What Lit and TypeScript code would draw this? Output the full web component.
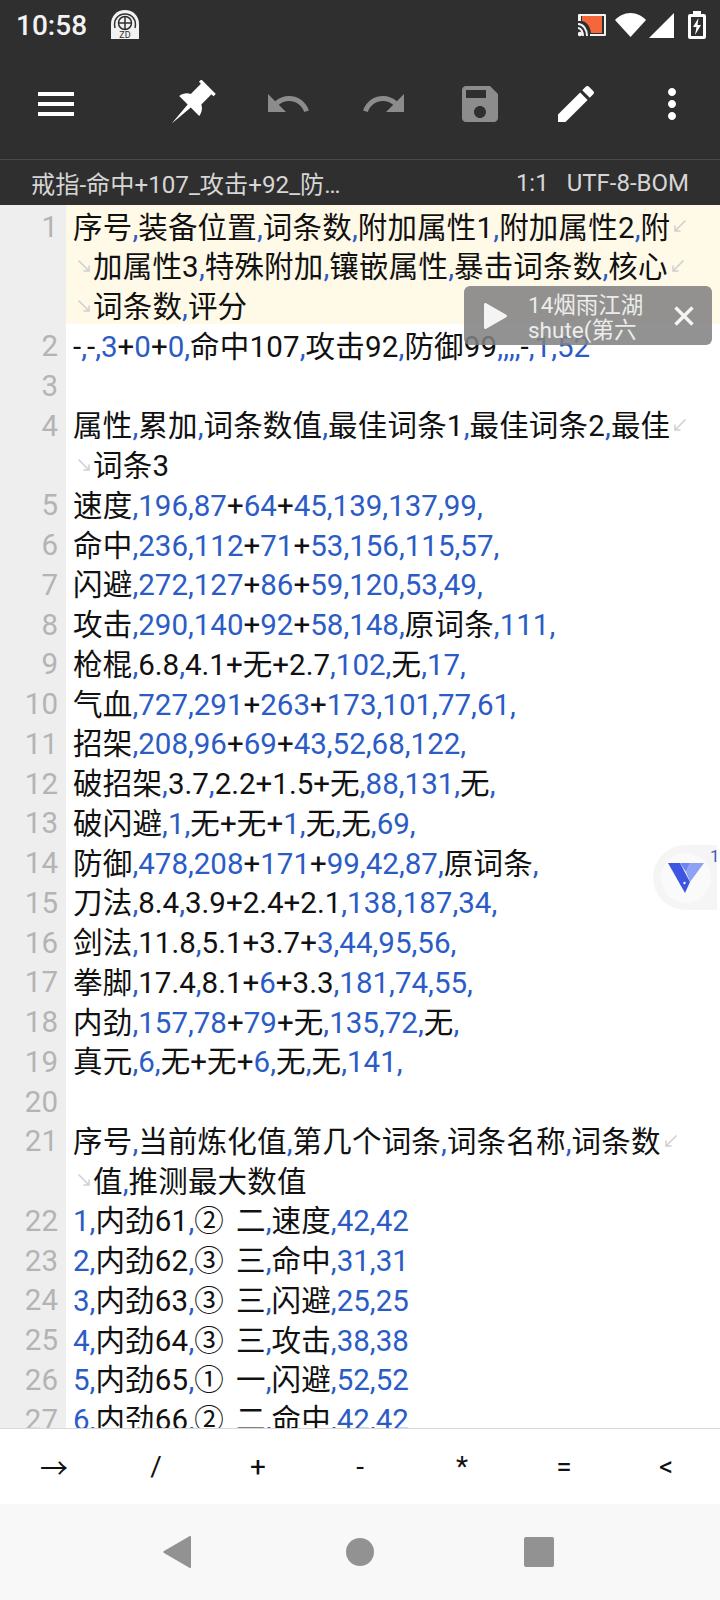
import { LitElement, css, html, svg } from 'lit';
import { customElement } from 'lit/decorators.js';

// each logical line holds its visual rows, wrapped the way the editor wraps them
const LINES: string[][] = [
  ['序号,装备位置,词条数,附加属性1,附加属性2,附', '加属性3,特殊附加,镶嵌属性,暴击词条数,核心', '词条数,评分'],
  ['-,-,3+0+0,命中107,攻击92,防御99,,,,-,1,52'],
  [''],
  ['属性,累加,词条数值,最佳词条1,最佳词条2,最佳', '词条3'],
  ['速度,196,87+64+45,139,137,99,'],
  ['命中,236,112+71+53,156,115,57,'],
  ['闪避,272,127+86+59,120,53,49,'],
  ['攻击,290,140+92+58,148,原词条,111,'],
  ['枪棍,6.8,4.1+无+2.7,102,无,17,'],
  ['气血,727,291+263+173,101,77,61,'],
  ['招架,208,96+69+43,52,68,122,'],
  ['破招架,3.7,2.2+1.5+无,88,131,无,'],
  ['破闪避,1,无+无+1,无,无,69,'],
  ['防御,478,208+171+99,42,87,原词条,'],
  ['刀法,8.4,3.9+2.4+2.1,138,187,34,'],
  ['剑法,11.8,5.1+3.7+3,44,95,56,'],
  ['拳脚,17.4,8.1+6+3.3,181,74,55,'],
  ['内劲,157,78+79+无,135,72,无,'],
  ['真元,6,无+无+6,无,无,141,'],
  [''],
  ['序号,当前炼化值,第几个词条,词条名称,词条数', '值,推测最大数值'],
  ['1,内劲61,②  二,速度,42,42'],
  ['2,内劲62,③  三,命中,31,31'],
  ['3,内劲63,③  三,闪避,25,25'],
  ['4,内劲64,③  三,攻击,38,38'],
  ['5,内劲65,①  一,闪避,52,52'],
  ['6,内劲66,②  二,命中,42,42'],
];

const KEYS = ['→', '/', '+', '-', '*', '=', '<'];

const icon = (d: string, dim = false) => html`<svg class="ticon ${dim ? 'dim' : ''}" viewBox="0 0 24 24"><path d=${d}></path></svg>`;

const wrapEnd = html`<svg class="wrap-end" viewBox="0 0 14 14"><path d="M12.5 1.5 2 12M2 6.5V12h5.500"></path></svg>`;
const wrapStart = html`<svg class="wrap-start" viewBox="0 0 14 14"><path d="M1.500 1.500 12 12M12 6.500V12H6.500"></path></svg>`;

function tokens(row: string) {
  return row.split(/([,+])/).map((t) => {
    if (t === ',' || /^\d+$/.test(t)) return html`<span class="num">${t}</span>`;
    return /[\u4e00-\u9fff]/.test(t) ? html`<span class="han">${t}</span>` : t;
  });
}

@customElement('app-root')
export class AppRoot extends LitElement {
  static styles = css`
    :host {
      display: flex;
      flex-direction: column;
      width: 720px;
      height: 1600px;
      position: relative;
      overflow: hidden;
      background: #fff;
      font-family: Roboto, 'Noto Sans CJK SC', sans-serif;
    }

    .status {
      height: 50px;
      background: #2f2f2f;
      display: flex;
      align-items: center;
      padding: 0 14px 0 16px;
      color: #f2f2f2;
      flex: none;
    }
    .time {
      font-size: 28px;
      font-weight: 500;
      width: 94px;
    }
    .globe { width: 30px; height: 30px; }
    .sys {
      margin-left: auto;
      display: flex;
      align-items: center;
    }
    .sys svg { display: block; }

    .toolbar {
      height: 110px;
      box-sizing: border-box;
      background: #2f2f2f;
      border-bottom: 1px solid #4a4a4a;
      display: flex;
      align-items: center;
      padding: 0 0 2px 24px;
      flex: none;
    }
    .slot {
      width: 96px;
      display: flex;
      justify-content: center;
    }
    .slot.first { width: 64px; margin-right: 56px; }
    .ticon {
      width: 48px;
      height: 48px;
      fill: #fff;
    }
    .ticon.dim { fill: #8c8c8c; }

    .tab {
      height: 45px;
      background: #2f2f2f;
      color: #d6d6d6;
      font-size: 24.200px;
      display: flex;
      align-items: center;
      justify-content: space-between;
      padding: 0 31px;
      flex: none;
    }
    .pos { font-size: 24px; }
    .pos span:first-child { margin-right: 18px; }

    .editor {
      flex: 1;
      min-height: 0;
      overflow: hidden;
      background: linear-gradient(to right, #eeeeee 66px, #fff 66px);
      color: #111;
      font-size: 29.500px;
    }
    .line {
      display: grid;
      grid-template-columns: 58px 1fr;
      column-gap: 15px;
    }
    .line.current {
      background: linear-gradient(to right, #eeeeee 66px, #fff9e8 66px);
    }
    .no {
      color: #b4b4b4;
      text-align: right;
      line-height: 39.750px;
      height: 39.750px;
      box-sizing: border-box;
      padding-top: 3px;
    }
    .row {
      height: 39.750px;
      line-height: 39.750px;
      box-sizing: border-box;
      padding-top: 7px;
      white-space: pre;
      word-spacing: -1.500px;
      display: flex;
      align-items: center;
    }
    .num { color: #2b5cc6; }
    .han { letter-spacing: 0.200px; }
    svg.wrap-end, svg.wrap-start {
      width: 14px;
      height: 14px;
      fill: none;
      stroke: #cfcfcf;
      stroke-width: 1.500;
      flex: none;
    }
    .wrap-end { margin: -4px 0 0 3px; }
    .wrap-start { margin: -4px 2px 0 4px; }

    .keys {
      height: 76px;
      box-sizing: border-box;
      border-top: 1px solid #d8d8d8;
      padding: 0 3px;
      display: grid;
      grid-template-columns: repeat(7, 1fr);
      align-items: center;
      justify-items: center;
      font-size: 28px;
      color: #111;
      background: #fff;
      flex: none;
    }

    .nav {
      height: 96px;
      background: #f8f8f8;
      display: flex;
      align-items: center;
      justify-content: center;
      gap: 149px;
      flex: none;
    }
    .nav svg { width: 32px; height: 32px; fill: #929292; display: block; }
    .nav svg.square { margin-left: -2px; margin-right: 2px; }

    .float {
      position: absolute;
      left: 464px;
      top: 286px;
      width: 248px;
      height: 59px;
      box-sizing: border-box;
      border-radius: 6px;
      background: rgba(128, 128, 128, 0.86);
      display: flex;
      align-items: center;
      padding: 0 18px 0 20px;
      overflow: hidden;
      color: #ececec;
    }
    .float .label {
      font-size: 22.500px;
      line-height: 25px;
      margin: 4px 0 0 21px;
      flex: 1;
      white-space: nowrap;
    }
    .float svg { display: block; flex: none; }

    .badge {
      position: absolute;
      left: 653px;
      top: 845px;
      width: 64px;
      height: 65px;
      border-radius: 33px 0 0 33px;
      background: #f5f5f5;
      display: flex;
      align-items: center;
      padding-left: 8px;
      box-sizing: border-box;
    }
    .badge .disc {
      width: 50px;
      height: 50px;
      border-radius: 50%;
      background: #fafafa;
      display: flex;
      align-items: center;
      justify-content: center;
    }
    .badge .count {
      position: absolute;
      left: 57px;
      top: 1px;
      font-size: 17px;
      color: #3f5fc0;
    }
  `;

  private renderLine(rows: string[], i: number) {
    return html`<div class="line ${i === 0 ? 'current' : ''}">
      <div class="no">${i + 1}</div>
      <div>
        ${rows.map(
          (row, r) => html`<div class="row">
            ${r > 0 ? wrapStart : ''}<span>${tokens(row)}</span>${r < rows.length - 1 ? wrapEnd : ''}
          </div>`,
        )}
      </div>
    </div>`;
  }

  render() {
    return html`
      <div class="status">
        <span class="time">10:58</span>
        <svg class="globe" viewBox="0 0 30 30">
          <path fill="#f2f2f2" d="M1 20V14C1 6 7 0 15 0s14 6 14 14v6z"></path>
          <rect x="1" y="20" width="28" height="9" fill="#f2f2f2"></rect>
          <g fill="none" stroke="#2f2f2f" stroke-width="1.500">
            <path d="M5 18C3 10 8 4 15 4s12 6 10 14"></path>
            <circle cx="15" cy="13" r="6.500"></circle>
            <path d="M15 6v14M8 13h14"></path>
          </g>
          <text x="15" y="28" font-size="9" text-anchor="middle" fill="#2f2f2f" font-family="Roboto, sans-serif">ZD</text>
        </svg>
        <div class="sys">
          <svg width="28" height="24" viewBox="0 0 28 24">
            <path fill="#f4f4f4" d="M1 1h26a1 1 0 0 1 1 1v20a1 1 0 0 1-1 1H12v-2h14V3H3v5H0V2a1 1 0 0 1 1-1z"></path>
            <path fill="#f4673a" d="M4 3h20v17H13C12 13 9 9 4 8z"></path>
            <path fill="none" stroke="#f4f4f4" stroke-width="2" d="M0 11c5 0 9 5 9 12M0 15c3 0 5 4 5 8"></path>
            <circle cx="2" cy="21" r="2.200" fill="#f4f4f4"></circle>
          </svg>
          <svg style="margin-left:9px" width="31" height="24" viewBox="0 0 31 24">
            <path fill="#fff" d="M15.500 24 0 7C4 3 9 0 15.500 0S27 3 31 7z"></path>
          </svg>
          <svg style="margin-left:3px" width="26" height="25" viewBox="0 0 26 25">
            <path fill="#fff" d="M25 0v25H0z"></path>
          </svg>
          <svg style="margin-left:13px" width="18" height="28" viewBox="0 0 18 28">
            <path fill="#fff" fill-rule="evenodd" d="M5 0h8v3h3a2 2 0 0 1 2 2v21a2 2 0 0 1-2 2H2a2 2 0 0 1-2-2V5a2 2 0 0 1 2-2h3zM3 6v19h12V6z"></path>
            <path fill="#fff" d="M10.500 7 5 16h3.500L7 24l6-10H9.500z"></path>
          </svg>
        </div>
      </div>

      <div class="toolbar">
        <div class="slot first">${icon('M3 18h18v-2H3v2zm0-5h18v-2H3v2zm0-7v2h18V6H3z')}</div>
        <div class="slot">
          <svg class="ticon" viewBox="0 0 24 24">
            <path transform="translate(-.6 .2) rotate(45 12 12) translate(12 12) scale(.93) translate(-12 -12)" d="M6.500-1.500h11v1.800H16v7.700c2 1 3.400 3 3.600 5.200h-6.400L12 26.500 10.800 13.200H4.400c.2-2.200 1.600-4.200 3.600-5.200V.3H6.500z"></path>
          </svg>
        </div>
        <div class="slot">${icon('M12.500 8c-2.650 0-5.050.99-6.900 2.600L2 7v9h9l-3.620-3.620c1.390-1.160 3.160-1.880 5.120-1.880 3.540 0 6.550 2.310 7.600 5.500l2.370-.78C21.080 11.030 17.150 8 12.500 8z', true)}</div>
        <div class="slot">${icon('M18.400 10.600C16.550 8.990 14.150 8 11.500 8c-4.650 0-8.580 3.030-9.960 7.220L3.900 16c1.050-3.190 4.050-5.500 7.600-5.500 1.950 0 3.730.72 5.120 1.880L13 16h9V7l-3.600 3.600z', true)}</div>
        <div class="slot">${icon('M17 3H5c-1.110 0-2 .9-2 2v14c0 1.100.89 2 2 2h14c1.100 0 2-.9 2-2V7l-4-4zm-5 16c-1.660 0-3-1.340-3-3s1.340-3 3-3 3 1.340 3 3-1.340 3-3 3zm3-10H5V5h10v4z', true)}</div>
        <div class="slot">${icon('M3 17.250V21h3.750L17.810 9.940l-3.750-3.750L3 17.250zM20.710 7.040c.39-.39.39-1.020 0-1.410l-2.340-2.340c-.39-.39-1.020-.39-1.410 0l-1.830 1.830 3.750 3.750 1.830-1.830z')}</div>
        <div class="slot">${icon('M12 8c1.100 0 2-.9 2-2s-.9-2-2-2-2 .9-2 2 .9 2 2 2zm0 2c-1.100 0-2 .9-2 2s.9 2 2 2 2-.9 2-2-.9-2-2-2zm0 6c-1.100 0-2 .9-2 2s.9 2 2 2 2-.9 2-2-.9-2-2-2z')}</div>
      </div>

      <div class="tab">
        <span>戒指-命中+107_攻击+92_防…</span>
        <span class="pos"><span>1:1</span><span>UTF-8-BOM</span></span>
      </div>

      <div class="editor">${LINES.map((rows, i) => this.renderLine(rows, i))}</div>

      <div class="keys">${KEYS.map((k) => html`<span>${k}</span>`)}</div>

      <div class="nav">
        <svg viewBox="0 0 32 32"><path d="M28 1v30a1 1 0 0 1-1.600.8L1 17a1.200 1.200 0 0 1 0-2L26.400.2A1 1 0 0 1 28 1z"></path></svg>
        <svg viewBox="0 0 32 32"><circle cx="16" cy="16" r="14"></circle></svg>
        <svg class="square" viewBox="0 0 32 32"><rect x="1" y="1" width="30" height="30" rx="2"></rect></svg>
      </div>

      <div class="float">
        <svg width="23" height="26" viewBox="0 0 23 26"><path fill="#f4f4f4" d="M0 1.500C0 .3 1.200-.4 2.200.2l20 11.500c1 .6 1 2 0 2.600l-20 11.500C1.200 26.400 0 25.700 0 24.500z"></path></svg>
        <div class="label">14烟雨江湖<br />shute(第六</div>
        <svg width="20" height="20" viewBox="0 0 20 20"><path stroke="#f4f4f4" stroke-width="3.400" d="M1.500 1.500l17 17M18.500 1.500l-17 17"></path></svg>
      </div>

      <div class="badge">
        <div class="disc">
          <svg width="36" height="30" viewBox="0 0 36 30">
            ${svg`<path fill="#3d55e0" d="M0 0h12l10 19-5 11z"></path>
            <path fill="#8ea2f5" d="M36 0H22l-4 9 4 10z"></path>
            <path fill="#6c86f0" d="M12 0h10l-4 9z"></path>
            <circle cx="16.500" cy="20" r="1.200" fill="#fff"></circle>`}
          </svg>
        </div>
        <span class="count">1</span>
      </div>
    `;
  }
}

declare global {
  interface HTMLElementTagNameMap {
    'app-root': AppRoot;
  }
}
